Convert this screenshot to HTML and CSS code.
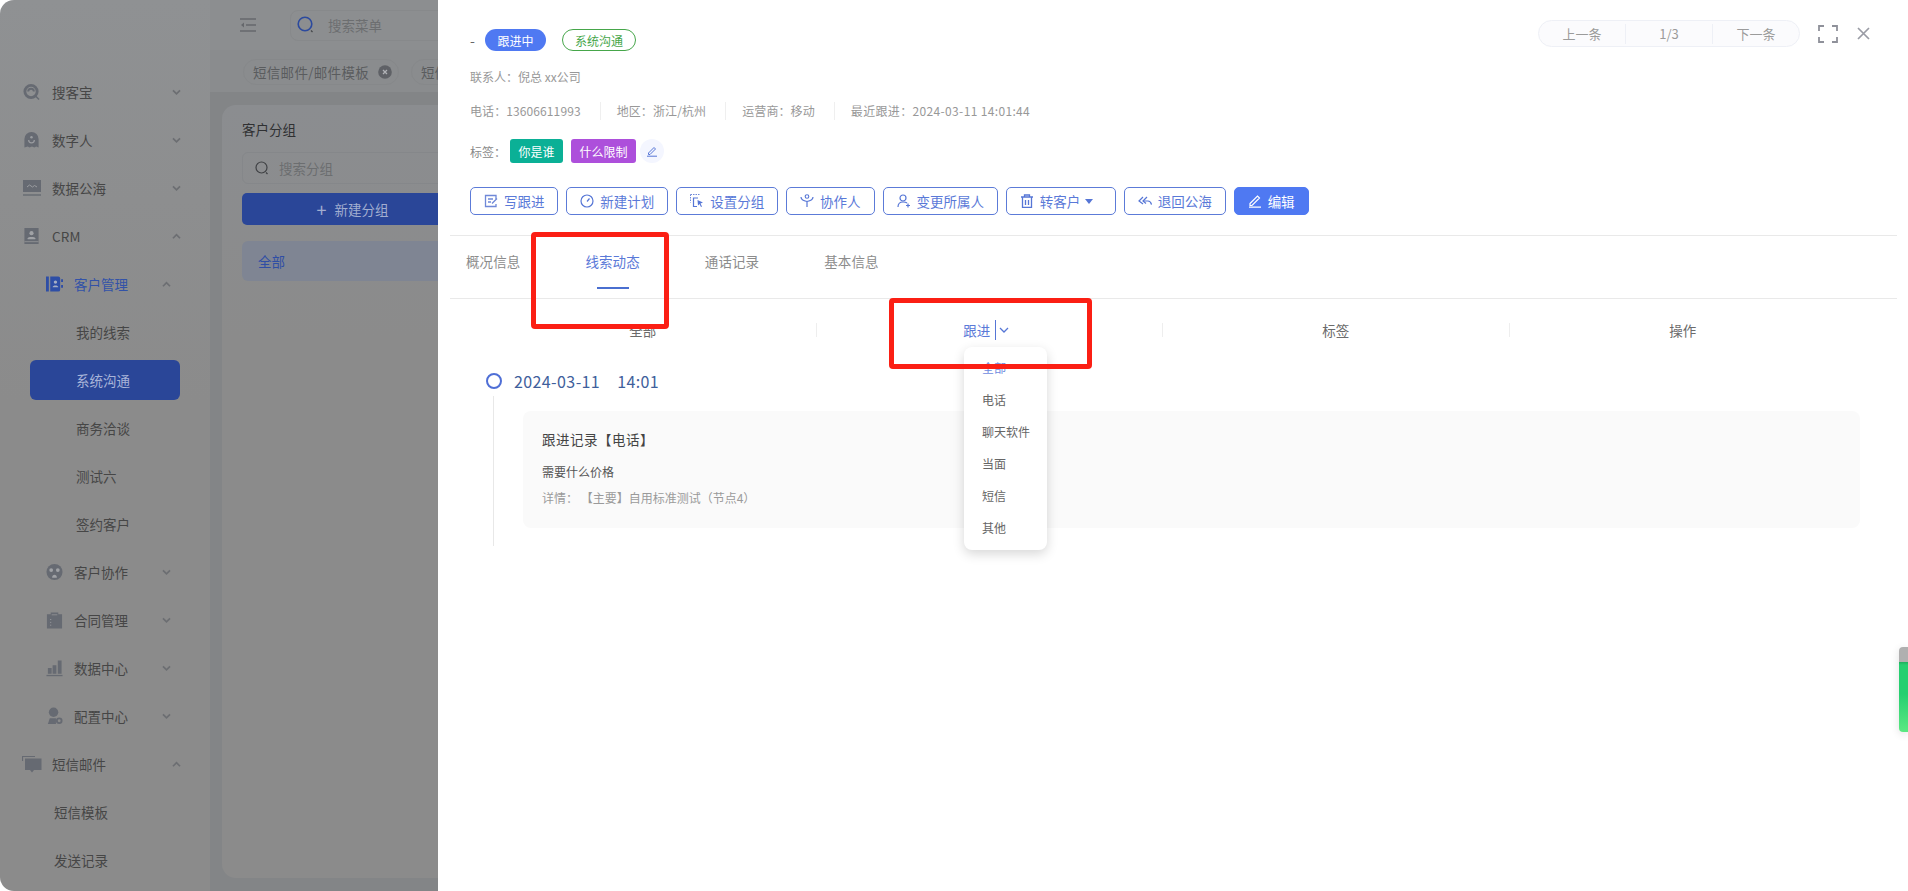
FILE: index.html
```html
<!DOCTYPE html>
<html lang="zh-CN">
<head>
<meta charset="utf-8">
<title>系统沟通</title>
<link rel="stylesheet" href="styles.css">
</head>
<body>
<div class="page">
  <aside class="sidebar">
    <div class="nav-row">
      <svg class="ico" viewBox="0 0 18 18"><circle cx="8.500" cy="8.500" r="6.500" fill="none" stroke="#666a72" stroke-width="3"/><path d="M5.500 8.500a3 3 0 0 1 6 0" fill="none" stroke="#666a72" stroke-width="2"/><path d="M13.500 13.500l3.500 3.500" stroke="#666a72" stroke-width="1.600"/></svg>
      <span class="nav-text">搜客宝</span>
      <svg class="chev" viewBox="0 0 10 8"><path d="M1 1.500l4 4 4-4" fill="none" stroke="#6c6e72" stroke-width="2"/></svg>
    </div>
    <div class="nav-row">
      <svg class="ico" viewBox="0 0 18 18"><path d="M1.500 8a7.500 7.500 0 0 1 15 0v9l-2.500-1.200-2 1.200-2.500-1.200-2.500 1.200-2-1.200-3.500 1.200z" fill="#666a72"/><path d="M6 9a3 3 0 0 0 6 0" fill="none" stroke="#9a9ca0" stroke-width="1.300"/><circle cx="9" cy="6" r="1.300" fill="#9a9ca0"/></svg>
      <span class="nav-text">数字人</span>
      <svg class="chev" viewBox="0 0 10 8"><path d="M1 1.500l4 4 4-4" fill="none" stroke="#6c6e72" stroke-width="2"/></svg>
    </div>
    <div class="nav-row">
      <svg class="ico ico-wide" viewBox="0 0 18 18"><path d="M0 1h18v12H0z" fill="#666a72"/><path d="M0 16h18" stroke="#666a72" stroke-width="1.400"/><path d="M4 8l2.500-2 3 2 2-1.500 2.500 1.500" fill="none" stroke="#9a9ca0" stroke-width="1"/></svg>
      <span class="nav-text">数据公海</span>
      <svg class="chev" viewBox="0 0 10 8"><path d="M1 1.500l4 4 4-4" fill="none" stroke="#6c6e72" stroke-width="2"/></svg>
    </div>
    <div class="nav-row">
      <svg class="ico" viewBox="0 0 18 18"><path d="M1.500 0.500h15v17h-15z" fill="#666a72"/><circle cx="9" cy="6" r="2.200" fill="#a0a2a6"/><path d="M5 11.500c0-2 8-2 8 0v1H5z" fill="#a0a2a6"/><path d="M1.500 15h15" stroke="#8d8f92" stroke-width="1"/></svg>
      <span class="nav-text nav-latin">CRM</span>
      <svg class="chev" viewBox="0 0 10 8"><path d="M1 6l4-4 4 4" fill="none" stroke="#6c6e72" stroke-width="2"/></svg>
    </div>
    <div class="nav-row nav-sub nav-open">
      <svg class="ico" viewBox="0 0 18 18"><path d="M0 1h3v16H0zM4.500 1H13a2 2 0 0 1 2 2v12a2 2 0 0 1-2 2H4.500zM16 4h2v3h-2zM16 10h2v3h-2z" fill="#2e4ea6"/><circle cx="10" cy="7" r="1.800" fill="#a6aec4"/><path d="M7 12.500c0-2.500 6-2.500 6 0z" fill="#a6aec4"/></svg>
      <span class="nav-text">客户管理</span>
      <svg class="chev" viewBox="0 0 10 8"><path d="M1 6l4-4 4 4" fill="none" stroke="#6c6e72" stroke-width="2"/></svg>
    </div>
    <div class="nav-leaf">我的线索</div>
    <div class="nav-leaf nav-active">系统沟通</div>
    <div class="nav-leaf">商务洽谈</div>
    <div class="nav-leaf">测试六</div>
    <div class="nav-leaf">签约客户</div>
    <div class="nav-row nav-sub">
      <svg class="ico" viewBox="0 0 18 18"><circle cx="9" cy="9" r="8.500" fill="#666a72"/><circle cx="5.500" cy="7" r="2" fill="#a0a2a6"/><circle cx="12.500" cy="7" r="2" fill="#a0a2a6"/><path d="M6.500 15c0-4 5-4 5 0z" fill="#a0a2a6"/></svg>
      <span class="nav-text">客户协作</span>
      <svg class="chev" viewBox="0 0 10 8"><path d="M1 1.500l4 4 4-4" fill="none" stroke="#6c6e72" stroke-width="2"/></svg>
    </div>
    <div class="nav-row nav-sub">
      <svg class="ico" viewBox="0 0 18 18"><path d="M1 3h4V1h8v2h4v15H1z" fill="#666a72"/><path d="M6 3.500h6" stroke="#8d8f92" stroke-width="1"/><path d="M5 8v1M5 11v1M5 14v1" stroke="#a0a2a6" stroke-width="1"/></svg>
      <span class="nav-text">合同管理</span>
      <svg class="chev" viewBox="0 0 10 8"><path d="M1 1.500l4 4 4-4" fill="none" stroke="#6c6e72" stroke-width="2"/></svg>
    </div>
    <div class="nav-row nav-sub">
      <svg class="ico" viewBox="0 0 18 18"><path d="M2 9h4v6H2zM7 6h4v9H7zM12.500 1h4v14h-4z" fill="#666a72"/><path d="M0.500 17h17" stroke="#666a72" stroke-width="1.400"/></svg>
      <span class="nav-text">数据中心</span>
      <svg class="chev" viewBox="0 0 10 8"><path d="M1 1.500l4 4 4-4" fill="none" stroke="#6c6e72" stroke-width="2"/></svg>
    </div>
    <div class="nav-row nav-sub">
      <svg class="ico" viewBox="0 0 18 18"><circle cx="8" cy="5" r="5" fill="#666a72"/><path d="M2 17.500l2-6h6.500v6z" fill="#666a72"/><circle cx="14" cy="14" r="2.500" fill="none" stroke="#666a72" stroke-width="2"/></svg>
      <span class="nav-text">配置中心</span>
      <svg class="chev" viewBox="0 0 10 8"><path d="M1 1.500l4 4 4-4" fill="none" stroke="#6c6e72" stroke-width="2"/></svg>
    </div>
    <div class="nav-row">
      <svg class="ico ico-chat" viewBox="0 0 20 18"><path d="M0.500 6V1.500H13" fill="none" stroke="#666a72" stroke-width="1.200"/><path d="M3 3.500h16.500V15H12l-2 2.500L8 15H3z" fill="#666a72"/></svg>
      <span class="nav-text">短信邮件</span>
      <svg class="chev" viewBox="0 0 10 8"><path d="M1 6l4-4 4 4" fill="none" stroke="#6c6e72" stroke-width="2"/></svg>
    </div>
    <div class="nav-leaf nav-plain">短信模板</div>
    <div class="nav-leaf nav-plain">发送记录</div>
  </aside>

  <main class="main">
    <div class="topbar">
      <svg class="burger" viewBox="0 0 16 14"><path d="M0 1h16M6 7h10M0 13h16" stroke="#66686c" stroke-width="1.500"/><path d="M4 4.500L1 7l3 2.500z" fill="#66686c"/></svg>
      <div class="menu-search">
        <svg class="menu-search-ico" viewBox="0 0 18 18"><circle cx="8" cy="8" r="6.800" fill="none" stroke="#2c4a9e" stroke-width="1.600"/><path d="M14 14.500l1.500 1.500" stroke="#44464a" stroke-width="1.300"/></svg>
        <span>搜索菜单</span>
      </div>
    </div>
    <div class="tagbar">
      <div class="tag-pill">
        <span class="tag-text">短信邮件/邮件模板</span>
        <svg class="tag-x" viewBox="0 0 14 14"><circle cx="7" cy="7" r="6.800" fill="#5f6166"/><path d="M5 5l4 4M9 5l-4 4" stroke="#b0b2b6" stroke-width="1.300"/></svg>
      </div>
      <div class="tag-pill">短信邮件</div>
    </div>
    <section class="card">
      <h2 class="card-title">客户分组</h2>
      <div class="group-search">
        <svg class="group-search-ico" viewBox="0 0 14 14"><circle cx="6.500" cy="6.500" r="5.500" fill="none" stroke="#3f4144" stroke-width="1.200"/><path d="M11 11.500l1.500 1.500" stroke="#3f4144" stroke-width="1.200"/></svg>
        <span>搜索分组</span>
      </div>
      <div class="group-add"><span class="group-plus">+</span><span>新建分组</span></div>
      <div class="group-all">全部</div>
    </section>
  </main>

  <div class="drawer">
    <header class="head">
      <div class="head-top">
        <div class="head-title">
          <span class="dash">-</span>
          <span class="badge badge-solid">跟进中</span>
          <span class="badge badge-line">系统沟通</span>
        </div>
        <div class="head-tools">
          <div class="pager"><span class="pager-cell">上一条</span><span class="pager-cell">1/3</span><span class="pager-cell">下一条</span></div>
          <svg class="tool-full" viewBox="0 0 20 18"><path d="M6 1H1v5M14 1h5v5M6 17H1v-5M14 17h5v-5" fill="none" stroke="#8f919a" stroke-width="1.800"/></svg>
          <svg class="tool-close" viewBox="0 0 13 13"><path d="M1 1l11 11M12 1L1 12" stroke="#9a9ca5" stroke-width="1.700"/></svg>
        </div>
      </div>
      <div class="meta meta-contact">联系人：倪总 xx公司</div>
      <div class="meta meta-line">
        <span class="meta-item">电话：13606611993</span>
        <span class="meta-item">地区：浙江/杭州</span>
        <span class="meta-item">运营商：移动</span>
        <span class="meta-item meta-recent">最近跟进：2024-03-11 14:01:44</span>
      </div>
      <div class="labels">
        <span class="labels-name">标签：</span>
        <span class="label label-teal">你是谁</span>
        <span class="label label-purple">什么限制</span>
        <span class="label-edit"><svg viewBox="0 0 12 12"><path d="M2.500 8L8 2.500l1.500 1.500L4 9.500H2.500zM1 11.200h10" fill="none" stroke="#5676d6" stroke-width="1"/></svg></span>
      </div>
      <div class="actions">
        <button class="btn"><svg class="btn-ico" viewBox="0 0 14 14"><path d="M12 5V1.500H1.500v11H12V10" fill="none" stroke="#6f88d8" stroke-width="1.300"/><path d="M4 5h5M4 8h3M8 9.500l5-5" fill="none" stroke="#6f88d8" stroke-width="1.300"/></svg>写跟进</button>
        <button class="btn"><svg class="btn-ico" viewBox="0 0 14 14"><circle cx="7" cy="7" r="6" fill="none" stroke="#5676d6" stroke-width="1.200"/><path d="M7 7.500l2.500-3" stroke="#5676d6" stroke-width="1.200"/></svg>新建计划</button>
        <button class="btn"><svg class="btn-ico" viewBox="0 0 14 14"><path d="M0.500 0.500h9M0.500 0.500v8" fill="none" stroke="#6f88d8" stroke-width="1" stroke-dasharray="1.500 1"/><path d="M8 4H3.500v8.500H7" fill="none" stroke="#5676d6" stroke-width="1.200"/><path d="M7.500 6l5.500 2.500-2.500 1 1.500 3-1 .5-1.500-3-1.500 1.500z" fill="#5676d6"/></svg>设置分组</button>
        <button class="btn"><svg class="btn-ico" viewBox="0 0 14 14"><circle cx="7" cy="2.500" r="1.800" fill="none" stroke="#5676d6" stroke-width="1.100"/><path d="M7 13V7M1 3c0 3 3 4 6 4.500M13 3c0 3-3 4-6 4.500" fill="none" stroke="#5676d6" stroke-width="1.200"/></svg>协作人</button>
        <button class="btn"><svg class="btn-ico" viewBox="0 0 14 14"><circle cx="6" cy="4" r="3" fill="none" stroke="#5676d6" stroke-width="1.200"/><path d="M1 13c0-3 2-5 5-5s3.500 .5 4 1" fill="none" stroke="#5676d6" stroke-width="1.200"/><path d="M11 9.500v4M9 11.500h4" stroke="#5676d6" stroke-width="1.200"/></svg>变更所属人</button>
        <button class="btn btn-caret"><svg class="btn-ico" viewBox="0 0 14 14"><path d="M1 3h12M4.500 3V1h5v2M2.500 3v10.500h9V3M5.500 6v5M8.500 6v5" fill="none" stroke="#5676d6" stroke-width="1.300"/></svg>转客户<svg class="caret" viewBox="0 0 8 5"><path d="M0 0h8L4 5z" fill="#5676d6"/></svg></button>
        <button class="btn"><svg class="btn-ico" viewBox="0 0 14 14"><path d="M5 3L1 7l4 3M9 3L5 7l3 2.500" fill="none" stroke="#5676d6" stroke-width="1.200"/><path d="M5.500 7H10c2 0 3 1.500 3.500 3.500" fill="none" stroke="#5676d6" stroke-width="1.200"/></svg>退回公海</button>
        <button class="btn btn-primary"><svg class="btn-ico" viewBox="0 0 14 14"><path d="M2 9.500L9.500 2l2 2L4 11.500H2zM1 13.200h12" fill="none" stroke="#fff" stroke-width="1.200"/></svg>编辑</button>
      </div>
    </header>

    <nav class="tabs">
      <div class="tab">概况信息</div>
      <div class="tab tab-active">线索动态<i class="tab-bar"></i></div>
      <div class="tab">通话记录</div>
      <div class="tab">基本信息</div>
    </nav>

    <div class="filters">
      <div class="filter">全部</div>
      <div class="filter filter-open">
        <span>跟进</span><i class="filter-rule"></i>
        <svg class="filter-chev" viewBox="0 0 10 6"><path d="M1 1l4 4 4-4" fill="none" stroke="#5676d6" stroke-width="1.300"/></svg>
      </div>
      <div class="filter">标签</div>
      <div class="filter filter-last">操作</div>
    </div>

    <div class="stamp">
      <i class="stamp-dot"></i>
      <span class="stamp-date">2024-03-11</span>
      <span class="stamp-time">14:01</span>
    </div>
    <div class="stamp-body">
      <article class="record">
        <h3 class="record-title">跟进记录【电话】</h3>
        <p class="record-desc">需要什么价格</p>
        <p class="record-detail">详情： 【主要】自用标准测试（节点4）</p>
      </article>
    </div>

    <ul class="dropdown">
      <li class="dropdown-item dropdown-on">全部</li>
      <li class="dropdown-item">电话</li>
      <li class="dropdown-item">聊天软件</li>
      <li class="dropdown-item">当面</li>
      <li class="dropdown-item">短信</li>
      <li class="dropdown-item">其他</li>
    </ul>
    <div class="mark mark-tab"></div>
    <div class="mark mark-filter"></div>
    <div class="side-widget"></div>
  </div>
</div>
</body>
</html>
```
FILE: styles.css
```css
* { box-sizing: border-box; }
html, body { margin: 0; height: 100%; background: #fff; }
body { font-family: "Noto Sans CJK SC", "Noto Sans", sans-serif; font-size: 13.5px; overflow: hidden; }
h2, h3, p, ul { margin: 0; padding: 0; font-weight: 400; }
i { display: block; }

.page { position: relative; display: flex; height: 891px; overflow: hidden; }

/* sidebar */
.sidebar { flex: 0 0 210px; display: flex; flex-direction: column; padding-top: 68px; background: linear-gradient(#8f9193, #8b8b8b 45%); border-radius: 14px 0 0 14px; color: #464646; }
.nav-row { flex: none; display: flex; align-items: center; height: 48px; padding-left: 23px; }
.ico { flex: none; width: 17px; height: 18px; margin-right: 12px; }
.ico-wide { width: 18px; margin-right: 11px; }
.ico-chat { width: 20px; margin-left: -1px; margin-right: 10px; }
.nav-text { flex: 1; }
.nav-latin { letter-spacing: .2px; }
.chev { flex: none; width: 9px; height: 7px; margin-right: 29px; }
.nav-sub { padding-left: 46px; }
.nav-sub .ico { margin-right: 11px; }
.nav-sub .chev { margin-right: 39px; }
.nav-open { color: #3252a8; }
.nav-leaf { flex: none; display: flex; align-items: center; height: 40px; margin: 4px 30px; padding-left: 46px; }
.nav-active { background: #2a4698; color: #a8b4d8; border-radius: 6px; }
.nav-plain { margin-left: 0; margin-right: 0; padding-left: 54px; }

/* main */
.main { flex: 1; display: flex; flex-direction: column; min-width: 0; background: #838587; }
.topbar { display: flex; align-items: center; height: 50px; padding-left: 30px; background: #8c8e90; }
.burger { width: 16px; height: 14px; }
.menu-search { display: flex; align-items: center; width: 300px; height: 31px; margin-left: 34px; padding-left: 6px; border: 1px solid #87898b; border-radius: 8px; color: #6c6e70; }
.menu-search-ico { width: 18px; height: 18px; margin-right: 13px; }
.tagbar { display: flex; align-items: flex-start; gap: 12px; height: 42px; padding: 9px 0 0 33px; background: #8a8c8e; }
.tag-pill { display: flex; align-items: center; gap: 9px; height: 26px; padding: 0 6px 0 9px; border: 1px solid #86888a; border-radius: 13px; color: #5a5c5e; }
.tag-text { letter-spacing: .3px; }
.tag-x { width: 14px; height: 14px; }
.card { flex: 1; display: flex; flex-direction: column; margin: 13px 12px; padding: 14px 20px; background: linear-gradient(#8b8d90, #8b8b8b 30%); border-radius: 14px; }
.card-title { font-size: 13.5px; line-height: 20px; color: #2f3032; }
.group-search { display: flex; align-items: center; width: 300px; height: 32px; margin-top: 13px; padding-left: 12px; border: 1px solid #85878a; border-radius: 6px; color: #6c6e70; }
.group-search-ico { width: 14px; height: 14px; margin-right: 10px; }
.group-add { display: flex; align-items: center; justify-content: center; gap: 8px; width: 300px; height: 32px; margin-top: 9px; padding-right: 79px; background: #2a4698; border-radius: 5px; color: #a2aed0; }
.group-plus { font-size: 18px; line-height: 18px; }
.group-all { display: flex; align-items: center; width: 300px; height: 40px; margin-top: 16px; padding-left: 16px; background: #7f8593; border-radius: 6px; color: #2f4ea5; }

/* drawer */
.drawer { position: absolute; top: 0; right: 0; bottom: 0; left: 438px; background: #fff; color: #666; }
.head { margin: 0 11px 0 12px; padding: 20px 27px 20px 20px; border-bottom: 1px solid #e9e9e9; }
.head-top { display: flex; justify-content: space-between; align-items: flex-start; height: 31px; }
.head-title { display: flex; align-items: center; margin-top: 9px; height: 22px; }
.dash { width: 15px; color: #666; font-size: 14px; }
.badge { display: flex; align-items: center; justify-content: center; height: 22px; border-radius: 11px; font-size: 12px; }
.badge-solid { width: 61px; background: #4f79f2; color: #fff; }
.badge-line { width: 74px; margin-left: 16px; border: 1px solid #46a64a; color: #46a64a; }
.head-tools { display: flex; align-items: center; height: 27px; }
.pager { display: flex; align-items: center; width: 262px; height: 27px; background: #fbfbfd; border: 1px solid #eef0f6; border-radius: 14px; color: #9b9b9b; font-size: 13px; }
.pager-cell { flex: 1; height: 20px; line-height: 20px; text-align: center; border-right: 1px solid #eef0f6; }
.pager-cell:last-child { border-right: 0; }
.tool-full { width: 20px; height: 18px; margin-left: 18px; }
.tool-close { width: 13px; height: 13px; margin-left: 19px; }
.meta { color: #989898; font-size: 12px; line-height: 18px; }
.meta-contact { margin-top: 17px; }
.meta-line { display: flex; margin-top: 16px; }
.meta-item { padding-right: 19px; margin-right: 16px; border-right: 1px solid #efefef; letter-spacing: .1px; }
.meta-item:last-child { border-right: 0; }
.meta-recent { letter-spacing: .35px; }
.labels { display: flex; align-items: center; margin-top: 19px; height: 24px; }
.labels-name { width: 40px; color: #888; font-size: 12px; }
.label { display: flex; align-items: center; justify-content: center; height: 24px; border-radius: 3px; color: #fff; font-size: 12px; }
.label-teal { width: 53px; background: #0bb096; }
.label-purple { width: 65px; margin-left: 8px; background: #ad4fdb; }
.label-edit { display: flex; align-items: center; justify-content: center; width: 24px; height: 24px; margin-left: 4px; background: #f4f6ff; border-radius: 50%; }
.label-edit svg { width: 12px; height: 12px; }
.actions { display: flex; gap: 8px; margin-top: 24px; }
.btn { display: flex; align-items: center; height: 28px; padding: 0 13px; background: #fff; border: 1px solid #5c7bd8; border-radius: 5px; color: #5a79d8; font: inherit; white-space: nowrap; }
.btn-ico { flex: none; width: 14px; height: 14px; margin-right: 5.900px; }
.btn-caret { padding-right: 21.500px; }
.caret { width: 8px; height: 5px; margin-left: 5px; }
.btn-primary { background: #4f79f2; border-color: #4f79f2; color: #fff; }

.tabs { display: flex; gap: 65px; height: 63px; margin: 0 11px 0 12px; padding: 15px 0 0 16px; border-bottom: 1px solid #e9e9e9; color: #8c8c8c; }
.tab { display: flex; flex-direction: column; align-items: center; line-height: 20px; white-space: nowrap; letter-spacing: .1px; }
.tab-active { color: #5a79d8; }
.tab-bar { width: 32px; height: 2px; margin-top: 16px; background: #4a6fd0; }

.filters { display: grid; grid-template-columns: repeat(4, 346.5px); align-items: center; margin: 24px 0 0 32px; color: #6b6b6b; }
.filter { display: flex; align-items: center; justify-content: center; height: 14px; border-right: 1px solid #eee; }
.filter-last { border-right: 0; }
.filter-open { padding-right: 6px; color: #5a79d8; }
.filter-rule { width: 1px; height: 20px; margin: 0 3px 0 5px; background: #5676d6; }
.filter-chev { width: 10px; height: 6px; }

.stamp { display: flex; align-items: center; height: 16px; margin: 36px 0 0 48px; color: #3f5f9c; font-size: 16px; letter-spacing: .4px; }
.stamp-dot { width: 16px; height: 16px; margin-right: 12px; border: 2.500px solid #4f6fd6; border-radius: 50%; }
.stamp-time { margin-left: 17px; }
.stamp-body { margin: 7px 48px 0 55px; padding: 15px 0 18px 29px; border-left: 1px solid #e8e8e8; }
.record { padding: 18px 19px 21px; background: #fafafa; border-radius: 8px; }
.record-title { font-size: 13.5px; line-height: 20px; color: #444; letter-spacing: .5px; }
.record-desc { margin-top: 14px; font-size: 12px; line-height: 18px; color: #555; }
.record-detail { margin-top: 8px; font-size: 12px; line-height: 18px; color: #9a9a9a; }

/* overlays */
.dropdown { position: absolute; top: 347px; left: 526px; width: 83px; height: 203px; padding-top: 4px; list-style: none; background: #fff; border-radius: 8px; box-shadow: 0 4px 12px rgba(0, 0, 0, .16); }
.dropdown-item { display: flex; align-items: center; height: 32px; padding-left: 18px; font-size: 12px; color: #666; }
.dropdown-on { color: #6f8be0; }
.mark { position: absolute; border: 5px solid #fb1f14; border-radius: 4px; }
.mark-tab { top: 232px; left: 93px; width: 138px; height: 97px; }
.mark-filter { top: 298px; left: 451px; width: 203px; height: 71px; }
.side-widget { position: absolute; top: 647px; right: 0; width: 9px; height: 85px; background: linear-gradient(#b0b0b0 0, #b0b0b0 15px, #1fae5e 15px, #26cf70 18px, #26cf70 55%, #5ce882 100%); border-radius: 4px 0 0 4px; box-shadow: 0 2px 8px rgba(0, 0, 0, .12); }
```
